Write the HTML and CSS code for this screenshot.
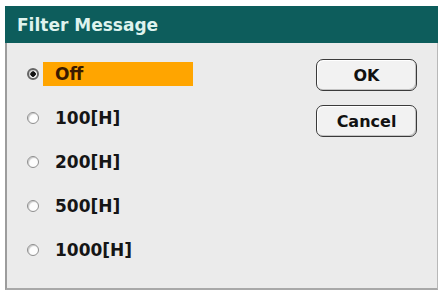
FILE: index.html
```html
<!DOCTYPE html>
<html lang="en">
<head>
  <meta charset="UTF-8" />
  <title>Filter Message</title>
  <link rel="stylesheet" href="styles.css">
</head>
<body>
  <div class="dialog">
    <header class="title">Filter Message</header>
    <div class="content">
      <ul class="options">
        <li class="option selected"><span class="radio"></span><span class="label">Off</span></li>
        <li class="option"><span class="radio"></span><span class="label">100[H]</span></li>
        <li class="option"><span class="radio"></span><span class="label">200[H]</span></li>
        <li class="option"><span class="radio"></span><span class="label">500[H]</span></li>
        <li class="option"><span class="radio"></span><span class="label">1000[H]</span></li>
      </ul>
      <div class="buttons">
        <button class="btn">OK</button>
        <button class="btn">Cancel</button>
      </div>
    </div>
  </div>
</body>
</html>
```

FILE: styles.css
```css
* {
  box-sizing: border-box;
}
body {
  margin: 0;
  background: #ffffff;
  font-family: 'DejaVu Sans', Verdana, sans-serif;
}
.dialog {
  margin: 6px 0 0 5px;
  width: 433px;
  height: 284px;
  display: flex;
  flex-direction: column;
}
.title {
  height: 37px;
  background: #0d5d5c;
  color: #dff3ee;
  font-weight: 700;
  font-size: 17px;
  line-height: 39px;
  padding-left: 12px;
}
.content {
  flex-grow: 1;
  display: flex;
  justify-content: space-between;
  background: #ebebeb;
  border-left: 2px solid #9c9c9c;
  border-right: 1px solid #b8b8b8;
  border-bottom: 2px solid #a8a8a8;
}
.options {
  list-style: none;
  margin: 0;
  padding: 9px 0 0 20px;
}
.option {
  height: 44px;
  display: flex;
  align-items: center;
  font-weight: 700;
  font-size: 17px;
  color: #151515;
}
.radio {
  width: 12px;
  height: 12px;
  border-radius: 50%;
  background: #fdfdfd;
  border: 1px solid #8e8e8e;
  box-shadow: inset 1px 1px 1px #c8c8c8;
  margin-right: 4px;
  flex-shrink: 0;
}
.selected .radio {
  border: 2px solid #666;
  background: radial-gradient(circle, #111 0 2.5px, #fafafa 3px);
}
.label {
  height: 24px;
  line-height: 24px;
  padding-left: 12px;
}
.selected .label {
  width: 150px;
  background: #ffa500;
  color: #3a1a00;
}
.buttons {
  display: flex;
  flex-direction: column;
  gap: 14px;
  padding: 16px 20px 0 0;
}
.btn {
  width: 101px;
  height: 32px;
  border: 1.5px solid #3a3a3a;
  border-radius: 7px;
  background: #f2f2f2;
  box-shadow: inset 1px 1px 0 #ffffff, inset -1px -1px 0 #c4c4c4;
  font-family: 'DejaVu Sans', Verdana, sans-serif;
  font-weight: 700;
  font-size: 16px;
  color: #111;
  padding: 0;
}
```
